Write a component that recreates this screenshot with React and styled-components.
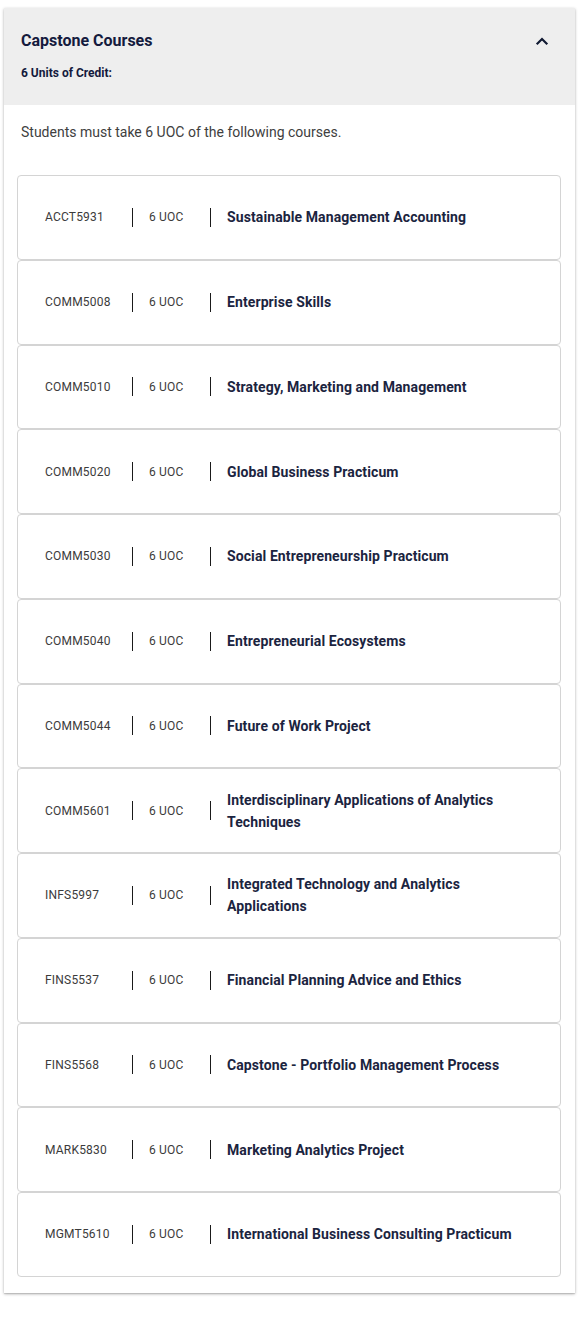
import styled, { createGlobalStyle } from "styled-components";

const GlobalStyle = createGlobalStyle`
  * { box-sizing: border-box; }
  body {
    margin: 0;
    background: #ffffff;
    font-family: Roboto, "Liberation Sans", Arial, sans-serif;
  }
`;

const courses = [
  { code: "ACCT5931", title: "Sustainable Management Accounting" },
  { code: "COMM5008", title: "Enterprise Skills" },
  { code: "COMM5010", title: "Strategy, Marketing and Management" },
  { code: "COMM5020", title: "Global Business Practicum" },
  { code: "COMM5030", title: "Social Entrepreneurship Practicum" },
  { code: "COMM5040", title: "Entrepreneurial Ecosystems" },
  { code: "COMM5044", title: "Future of Work Project" },
  { code: "COMM5601", title: "Interdisciplinary Applications of Analytics Techniques" },
  { code: "INFS5997", title: "Integrated Technology and Analytics Applications" },
  { code: "FINS5537", title: "Financial Planning Advice and Ethics" },
  { code: "FINS5568", title: "Capstone - Portfolio Management Process" },
  { code: "MARK5830", title: "Marketing Analytics Project" },
  { code: "MGMT5610", title: "International Business Consulting Practicum" },
];

export default function App() {
  return (
    <>
      <GlobalStyle />
      <Page>
        <Panel>
          <Header>
            <HeaderText>
              <Title>Capstone Courses</Title>
              <Subtitle>6 Units of Credit:</Subtitle>
            </HeaderText>
            <Toggle aria-label="Collapse">
              <svg width="14" height="14" viewBox="0 0 14 14" fill="none">
                <polyline
                  points="2.5,9.5 7,5 11.5,9.5"
                  stroke="#111a33"
                  strokeWidth="2.2"
                  strokeLinecap="square"
                />
              </svg>
            </Toggle>
          </Header>
          <Body>
            <Intro>Students must take 6 UOC of the following courses.</Intro>
            <List>
              {courses.map((c) => (
                <CourseCard key={c.code}>
                  <Code>{c.code}</Code>
                  <Divider />
                  <Uoc>6 UOC</Uoc>
                  <Divider />
                  <CourseTitle>{c.title}</CourseTitle>
                </CourseCard>
              ))}
            </List>
          </Body>
        </Panel>
      </Page>
    </>
  );
}

const Page = styled.div`
  padding: 8px 7px 30px 4px;
`;

const Panel = styled.section`
  background: #ffffff;
  box-shadow: 0 1px 3px rgba(0, 0, 0, 0.28), 0 1px 1px rgba(0, 0, 0, 0.1);
`;

const Header = styled.div`
  display: flex;
  align-items: flex-start;
  justify-content: space-between;
  background: #eeeeee;
  padding: 21px 26px 23px 17px;
`;

const HeaderText = styled.div`
  display: flex;
  flex-direction: column;
  gap: 11px;
`;

const Title = styled.h2`
  margin: 0;
  font-size: 16px;
  line-height: 24px;
  font-weight: 700;
  color: #141a3d;
`;

const Subtitle = styled.div`
  font-size: 12px;
  line-height: 18px;
  font-weight: 700;
  color: #141a3d;
`;

const Toggle = styled.button`
  display: flex;
  align-items: center;
  justify-content: center;
  margin-top: 5px;
  padding: 0;
  border: 0;
  background: none;
  cursor: pointer;
`;

const Body = styled.div`
  padding: 17px 14px 16px 13px;
`;

const Intro = styled.p`
  margin: 0 0 33px;
  padding-left: 4px;
  font-size: 14px;
  line-height: 20px;
  font-weight: 400;
  color: #404040;
`;

const List = styled.div`
  display: flex;
  flex-direction: column;
`;

const CourseCard = styled.div`
  display: flex;
  align-items: center;
  min-height: 84.75px;
  padding: 8px 30px 8px 27px;
  border: 1px solid #d4d4d4;
  border-radius: 4px;
  background: #ffffff;
`;

const Code = styled.span`
  flex: 0 0 87px;
  font-size: 12px;
  line-height: 18px;
  letter-spacing: 0.2px;
  color: #3b3b3b;
`;

const Divider = styled.span`
  flex: 0 0 1px;
  align-self: center;
  height: 19px;
  background: #1a1a1a;
`;

const Uoc = styled.span`
  flex: 0 0 77px;
  padding-left: 16px;
  font-size: 12px;
  line-height: 18px;
  letter-spacing: 0.2px;
  color: #3b3b3b;
`;

const CourseTitle = styled.span`
  flex: 1;
  padding-left: 16px;
  font-size: 14px;
  line-height: 22px;
  font-weight: 700;
  letter-spacing: 0.1px;
  color: #1b2440;
`;
